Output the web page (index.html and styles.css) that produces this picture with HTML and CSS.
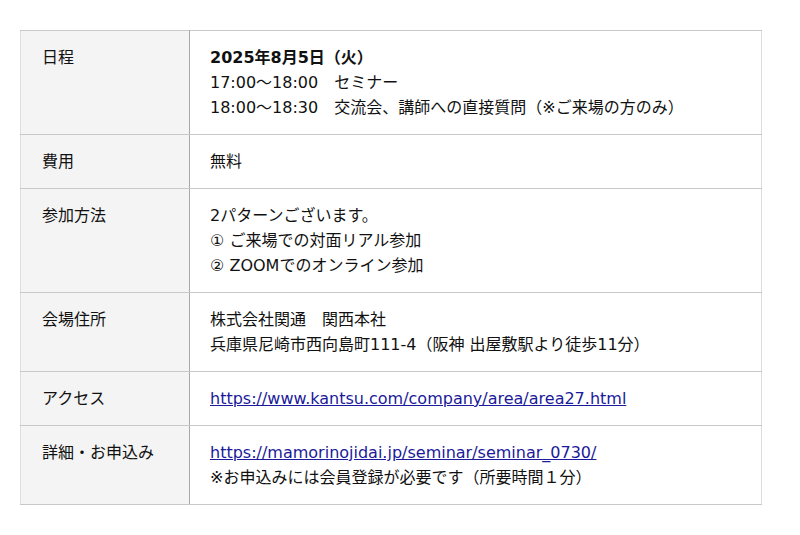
FILE: index.html
```html
<!DOCTYPE html>
<html>
<head>
<meta charset="utf-8">
<link rel="stylesheet" href="styles.css">
</head>
<body>
<div class="wrap">
<table class="info">
<tr>
<th>日程</th>
<td><strong>2025年8月5日（火）</strong><br>17:00～18:00　セミナー<br>18:00～18:30　交流会、講師への直接質問（※ご来場の方のみ）</td>
</tr>
<tr>
<th>費用</th>
<td>無料</td>
</tr>
<tr>
<th>参加方法</th>
<td>2パターンございます。<br>① ご来場での対面リアル参加<br>② ZOOMでのオンライン参加</td>
</tr>
<tr>
<th>会場住所</th>
<td>株式会社関通　関西本社<br>兵庫県尼崎市西向島町111-4（阪神 出屋敷駅より徒歩11分）</td>
</tr>
<tr>
<th>アクセス</th>
<td><a href="#">https://www.kantsu.com/company/area/area27.html</a></td>
</tr>
<tr>
<th>詳細・お申込み</th>
<td><a href="#">https://mamorinojidai.jp/seminar/seminar_0730/</a><br>※お申込みには会員登録が必要です（所要時間１分）</td>
</tr>
</table>
</div>
</body>
</html>
```
FILE: styles.css
```css
html, body {
  margin: 0;
  padding: 0;
  background: #fff;
}
body {
  font-family: "DejaVu Sans", "Noto Sans CJK JP", sans-serif;
  font-size: 16px;
  line-height: 25px;
  color: #111;
}
.wrap {
  padding: 30px 20px;
}
.info {
  width: 742px;
  border-collapse: collapse;
  border: 1px solid #ddd;
}
.info th,
.info td {
  font-family: "DejaVu Sans", "Noto Sans CJK JP", sans-serif;
  font-size: 16px;
  text-align: left;
  vertical-align: top;
  padding: 14px 20px;
  border-top: 1px solid #c8c8c8;
  border-bottom: 1px solid #c8c8c8;
}
.info th {
  width: 127px;
  font-weight: normal;
  background: #f4f4f4;
  border-right: 1px solid #aaa;
  padding-left: 21px;
}
.info td strong {
  font-weight: bold;
}
.info a {
  color: #1a1a9a;
  text-decoration: underline;
}
```
